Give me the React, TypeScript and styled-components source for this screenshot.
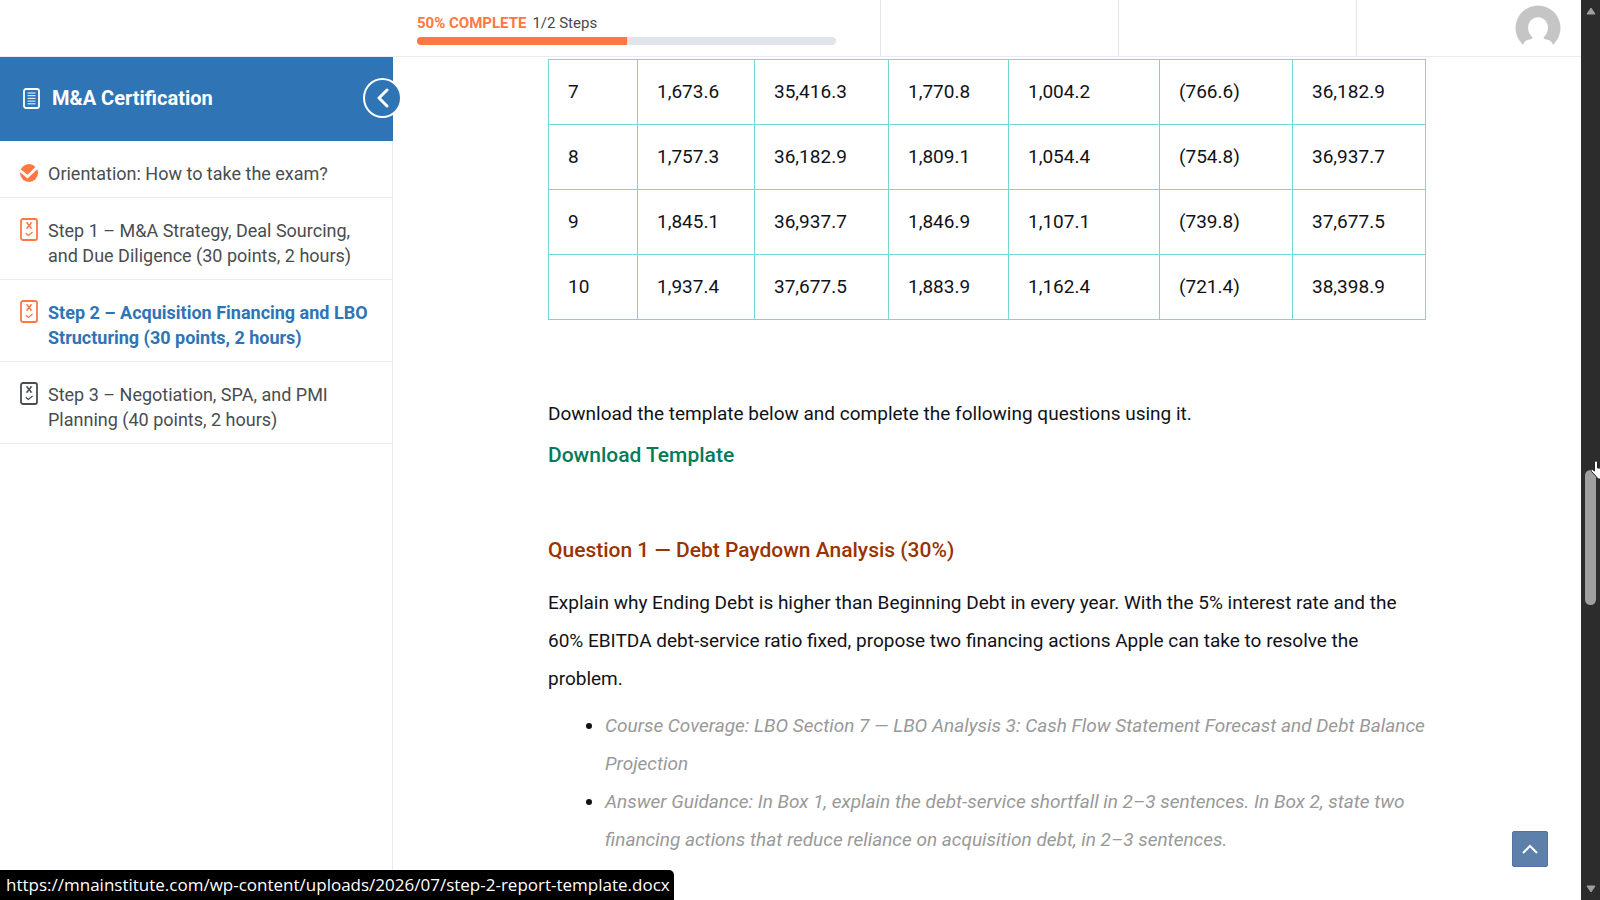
import React from "react";
import styled, { createGlobalStyle } from "styled-components";

const GlobalStyle = createGlobalStyle`
  *, *::before, *::after { box-sizing: border-box; }
  html, body { margin: 0; padding: 0; height: 100%; overflow: hidden; }
  #root { height: 100%; }
  body { background: #fff; color: #101218; font-family: Roboto, "Liberation Sans", sans-serif; }
  h1, h2, p, ul { margin: 0; padding: 0; }
`;

const Shell = styled.div`
  display: flex;
  height: 100%;
`;

const Page = styled.div`
  flex: 1;
  min-width: 0;
  display: flex;
  flex-direction: column;
`;

const Header = styled.header`
  flex: none;
  height: 57px;
  display: flex;
  border-bottom: 1px solid #e9ebf2;
`;

const HeaderBrand = styled.div`
  flex: none;
  width: 393px;
`;

const HeaderProgress = styled.div`
  flex: 1;
  min-width: 0;
  padding: 14px 44px 0 24px;
`;

const ProgressText = styled.div`
  display: flex;
  gap: 6px;
  font-size: 15px;
  line-height: 18px;
  color: #45494d;
`;

const ProgressStrong = styled.strong`
  font-weight: 700;
  color: #ff7741;
`;

const Track = styled.div`
  height: 8px;
  margin-top: 5px;
  border-radius: 4px;
  background: #e1e5ea;
  overflow: hidden;
`;

const Fill = styled.div`
  height: 100%;
  background: #ff7741;
`;

const HeaderCell = styled.div<{ $width: number }>`
  flex: none;
  width: ${(p) => p.$width}px;
  border-left: 1px solid #e5e7ee;
  display: flex;
  align-items: center;
  justify-content: flex-end;
  padding: 0 20px;
`;

const AvatarButton = styled.button`
  width: 46px;
  height: 46px;
  padding: 0;
  border: 0;
  border-radius: 50%;
  background: none;
  svg { display: block; }
`;

const Body = styled.div`
  flex: 1;
  min-height: 0;
  display: flex;
`;

const Sidebar = styled.aside`
  flex: none;
  width: 393px;
  border-right: 1px solid #e9ebf2;
`;

const CourseBar = styled.div`
  position: relative;
  height: 84px;
  margin-right: -1px;
  display: flex;
  align-items: center;
  gap: 12px;
  padding: 0 0 2px 23px;
  background: #2f74b5;
  color: #fff;
`;

const CourseTitle = styled.h1`
  font-size: 20px;
  line-height: 24px;
  font-weight: 700;
`;

const CollapseButton = styled.button`
  position: absolute;
  right: -9px;
  top: 21px;
  width: 39px;
  height: 40px;
  display: grid;
  place-items: center;
  padding: 0;
  border: 2px solid #fff;
  border-radius: 50%;
  background: #2f74b5;
  color: #fff;
`;

const StepLink = styled.a<{ $current?: boolean }>`
  display: flex;
  align-items: flex-start;
  gap: 10px;
  padding: 20px 20px 11px 20px;
  border-bottom: 1px solid #e9ebf2;
  font-size: 18px;
  line-height: 25px;
  text-decoration: none;
  font-weight: ${(p) => (p.$current ? 700 : 400)};
  color: ${(p) => (p.$current ? "#2f74b5" : "#494d50")};
  svg { flex: none; }
`;

const Main = styled.main`
  flex: 1;
  min-width: 0;
  overflow: hidden;
  padding-top: 2px;
`;

const Article = styled.article`
  max-width: 878px;
  margin: 0 auto;
`;

const DebtTable = styled.table`
  width: 100%;
  table-layout: fixed;
  border-collapse: collapse;
  font-size: 19px;
  line-height: 24px;
  td {
    height: 65px;
    padding: 0 0 1px 19px;
    border: 1px solid #73d8d8;
  }
`;

const Paragraph = styled.p<{ $top: number }>`
  margin-top: ${(p) => p.$top}px;
  font-size: 19px;
  line-height: 38px;
`;

const DownloadLine = styled.div`
  margin-top: 8px;
  line-height: 28px;
`;

const DownloadLink = styled.a`
  font-size: 21px;
  font-weight: 500;
  color: #067a5b;
  text-decoration: none;
`;

const QuestionTitle = styled.h2`
  && { margin: 65px 0 20px; }
  font-size: 21px;
  line-height: 28px;
  font-weight: 500;
  color: #993300;
`;

const Notes = styled.ul`
  && { margin-top: 9px; padding-left: 57px; }
  font-size: 19px;
  line-height: 38px;
`;

const Note = styled.em`
  color: #999;
`;

const ScrollRail = styled.div`
  flex: none;
  width: 19px;
  height: 100%;
  display: flex;
  flex-direction: column;
  align-items: center;
  padding: 7px 0 7px;
  background: #2c2c2c;
`;

const RailSpace = styled.div<{ $grow: number }>`
  flex: ${(p) => p.$grow} 1 0;
`;

const Thumb = styled.div`
  flex: 135 1 0;
  width: 11px;
  border-radius: 6px;
  background: #9f9f9f;
`;

const TopButton = styled.button`
  position: fixed;
  right: 52px;
  bottom: 33px;
  width: 36px;
  height: 36px;
  display: grid;
  place-items: center;
  padding: 0;
  border: 1px solid #4d74a4;
  border-radius: 2px;
  background: #5d80ab;
  color: #fff;
`;

const StatusBubble = styled.div`
  position: fixed;
  left: 0;
  bottom: 0;
  height: 30px;
  padding: 0 4px 0 6px;
  border-top-right-radius: 5px;
  background: #000;
  color: #fff;
  font: 17px/30px "Open Sans", "Noto Sans", sans-serif;
  white-space: nowrap;
`;

const Pointer = styled.svg`
  position: fixed;
  right: 0;
  top: 460px;
`;

const rows = [
  ["7", "1,673.6", "35,416.3", "1,770.8", "1,004.2", "(766.6)", "36,182.9"],
  ["8", "1,757.3", "36,182.9", "1,809.1", "1,054.4", "(754.8)", "36,937.7"],
  ["9", "1,845.1", "36,937.7", "1,846.9", "1,107.1", "(739.8)", "37,677.5"],
  ["10", "1,937.4", "37,677.5", "1,883.9", "1,162.4", "(721.4)", "38,398.9"],
];

const columnWidths = [89, 117, 134, 120, 151, 133, 133];

const ORANGE = "#ff7741";

const DoneIcon = () => (
  <svg width="18" height="25" viewBox="0 0 18 25" aria-hidden="true">
    <circle cx="9" cy="12" r="9" fill={ORANGE} />
    <path d="M0 9.500l7.500 6.200L18.500 5" fill="none" stroke="#fff" strokeWidth="2.800" />
  </svg>
);

const QuizIcon = ({ color }: { color: string }) => (
  <svg width="18" height="25" viewBox="0 0 18 25" fill="none" stroke={color} aria-hidden="true">
    <rect x="1" y="1" width="16" height="21" rx="2" strokeWidth="1.8" />
    <path d="M7 5l4.2 5M11.2 5L7 10" strokeWidth="1.5" />
    <path d="M6 4.8h2.2M10 4.8h2.2M6 10.2h2.2M10 10.2h2.2" strokeWidth="0.9" />
    <path d="M5.800 15.200l2.500 2.200L12.600 14" strokeWidth="1.300" />
  </svg>
);

const CourseIcon = () => (
  <svg width="17" height="21" viewBox="0 0 17 21" fill="none" stroke="#fff" aria-hidden="true">
    <rect x="1" y="1" width="15" height="19" rx="2" strokeWidth="1.800" />
    <path d="M4.500 5h8M4.500 7.700h8M4.500 10.400h8M4.500 13.100h8M4.500 15.800h8" strokeWidth="1" />
  </svg>
);

const Avatar = () => (
  <svg width="46" height="46" viewBox="0 0 46 46" aria-hidden="true">
    <circle cx="23" cy="23" r="22.500" fill="#c5c5c5" />
    <ellipse cx="23" cy="23" rx="10" ry="10.800" fill="#fff" />
    <path d="M17.500 30v2c0 1.500-1 2.200-3 2.500-3.500.6-5.500 2-6.500 5.500v6h30v-6c-1-3.500-3-4.900-6.500-5.500-2-.3-3-1-3-2.500v-2z" fill="#fff" />
  </svg>
);

export default function App() {
  const progress = 50;
  return (
    <Shell>
      <GlobalStyle />
      <Page>
        <Header>
          <HeaderBrand />
          <HeaderProgress>
            <ProgressText>
              <ProgressStrong>{progress}% COMPLETE</ProgressStrong>
              <span>1/2 Steps</span>
            </ProgressText>
            <Track role="progressbar" aria-label="Course progress" aria-valuenow={progress}>
              <Fill style={{ width: `${progress}%` }} />
            </Track>
          </HeaderProgress>
          <HeaderCell $width={238} />
          <HeaderCell $width={238} />
          <HeaderCell $width={225}>
            <AvatarButton aria-label="Account"><Avatar /></AvatarButton>
          </HeaderCell>
        </Header>
        <Body>
          <Sidebar>
            <CourseBar>
              <CourseIcon />
              <CourseTitle>M&amp;A Certification</CourseTitle>
              <CollapseButton aria-label="Collapse sidebar">
                <svg width="12" height="20" viewBox="0 0 12 20" fill="none" stroke="currentColor" strokeWidth="3" strokeLinecap="round" strokeLinejoin="round">
                  <path d="M10 2L2 10l8 8" />
                </svg>
              </CollapseButton>
            </CourseBar>
            <nav>
              <StepLink href="#orientation"><DoneIcon /><span>Orientation: How to take the exam?</span></StepLink>
              <StepLink href="#step-1"><QuizIcon color={ORANGE} /><span>Step 1 – M&amp;A Strategy, Deal Sourcing, and Due Diligence (30 points, 2 hours)</span></StepLink>
              <StepLink href="#step-2" $current><QuizIcon color={ORANGE} /><span>Step 2 – Acquisition Financing and LBO Structuring (30 points, 2 hours)</span></StepLink>
              <StepLink href="#step-3"><QuizIcon color="#494d50" /><span>Step 3 – Negotiation, SPA, and PMI Planning (40 points, 2 hours)</span></StepLink>
            </nav>
          </Sidebar>
          <Main>
            <Article>
              <DebtTable>
                <colgroup>
                  {columnWidths.map((w, i) => <col key={i} width={w} />)}
                </colgroup>
                <tbody>
                  {rows.map((row) => (
                    <tr key={row[0]}>{row.map((cell, i) => <td key={i}>{cell}</td>)}</tr>
                  ))}
                </tbody>
              </DebtTable>
              <Paragraph $top={75}>Download the template below and complete the following questions using it.</Paragraph>
              <DownloadLine>
                <DownloadLink href="https://mnainstitute.com/wp-content/uploads/2026/07/step-2-report-template.docx">Download Template</DownloadLink>
              </DownloadLine>
              <QuestionTitle>Question 1 — Debt Paydown Analysis (30%)</QuestionTitle>
              <Paragraph $top={0}>
                Explain why Ending Debt is higher than Beginning Debt in every year. With the 5% interest rate and the 60% EBITDA debt-service ratio fixed, propose two financing actions Apple can take to resolve the problem.
              </Paragraph>
              <Notes>
                <li><Note>Course Coverage: LBO Section 7 — LBO Analysis 3: Cash Flow Statement Forecast and Debt Balance Projection</Note></li>
                <li><Note>Answer Guidance: In Box 1, explain the debt-service shortfall in 2–3 sentences. In Box 2, state two financing actions that reduce reliance on acquisition debt, in 2–3 sentences.</Note></li>
              </Notes>
            </Article>
          </Main>
        </Body>
      </Page>
      <ScrollRail aria-hidden="true">
        <svg width="10" height="8" viewBox="0 0 10 8"><path d="M5 1L9 7H1z" fill="#9f9f9f" stroke="#9f9f9f" strokeLinejoin="round" /></svg>
        <RailSpace $grow={454} />
        <Thumb />
        <RailSpace $grow={280} />
        <svg width="10" height="8" viewBox="0 0 10 8"><path d="M5 7L9 1H1z" fill="#9f9f9f" stroke="#9f9f9f" strokeLinejoin="round" /></svg>
      </ScrollRail>
      <TopButton aria-label="Back to top">
        <svg width="16" height="10" viewBox="0 0 16 10" fill="none" stroke="currentColor" strokeWidth="2">
          <path d="M1 9l7-7 7 7" />
        </svg>
      </TopButton>
      <StatusBubble>https://mnainstitute.com/wp-content/uploads/2026/07/step-2-report-template.docx</StatusBubble>
      <Pointer width="10" height="20" viewBox="0 0 10 20" aria-hidden="true">
        <path d="M4.500 2c0-1.500 3-1.500 3 0v6H11v11H8c-2-3-4-5-6.500-7.500C.5 10 2 9 3.200 10l1.300 1z" fill="#fff" stroke="#222" strokeWidth="1" />
      </Pointer>
    </Shell>
  );
}
